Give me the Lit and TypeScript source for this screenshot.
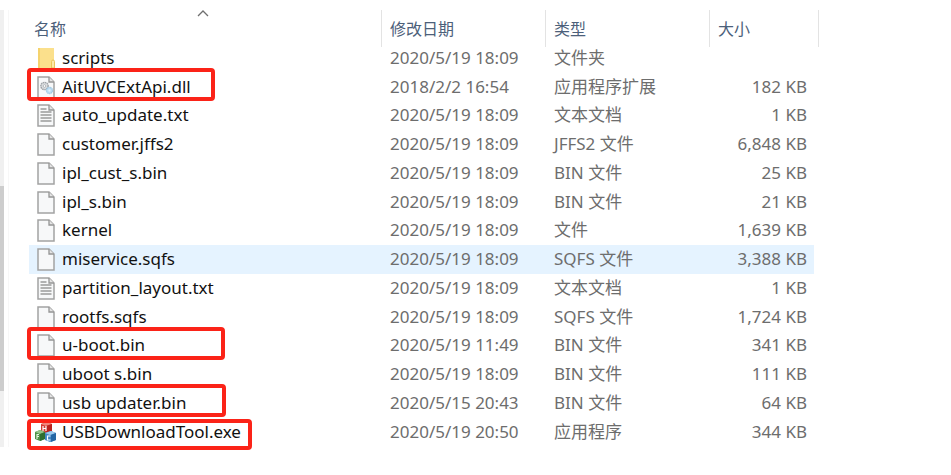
import { LitElement, html, svg, css, nothing } from "lit";
import { customElement } from "lit/decorators.js";
import { classMap } from "lit/directives/class-map.js";
import { styleMap } from "lit/directives/style-map.js";

type Kind = "folder" | "dll" | "text" | "blank" | "exe";

interface FileRow {
  name: string;
  date: string;
  type: string;
  size: string;
  kind: Kind;
  hover?: boolean;
  mark?: number;
  low?: boolean;
}

const files: FileRow[] = [
  { name: "scripts", date: "2020/5/19 18:09", type: "文件夹", size: "", kind: "folder" },
  { name: "AitUVCExtApi.dll", date: "2018/2/2 16:54", type: "应用程序扩展", size: "182 KB", kind: "dll", mark: 188 },
  { name: "auto_update.txt", date: "2020/5/19 18:09", type: "文本文档", size: "1 KB", kind: "text" },
  { name: "customer.jffs2", date: "2020/5/19 18:09", type: "JFFS2 文件", size: "6,848 KB", kind: "blank" },
  { name: "ipl_cust_s.bin", date: "2020/5/19 18:09", type: "BIN 文件", size: "25 KB", kind: "blank" },
  { name: "ipl_s.bin", date: "2020/5/19 18:09", type: "BIN 文件", size: "21 KB", kind: "blank" },
  { name: "kernel", date: "2020/5/19 18:09", type: "文件", size: "1,639 KB", kind: "blank" },
  { name: "miservice.sqfs", date: "2020/5/19 18:09", type: "SQFS 文件", size: "3,388 KB", kind: "blank", hover: true },
  { name: "partition_layout.txt", date: "2020/5/19 18:09", type: "文本文档", size: "1 KB", kind: "text" },
  { name: "rootfs.sqfs", date: "2020/5/19 18:09", type: "SQFS 文件", size: "1,724 KB", kind: "blank" },
  { name: "u-boot.bin", date: "2020/5/19 11:49", type: "BIN 文件", size: "341 KB", kind: "blank", mark: 198 },
  { name: "uboot s.bin", date: "2020/5/19 18:09", type: "BIN 文件", size: "111 KB", kind: "blank" },
  { name: "usb updater.bin", date: "2020/5/15 20:43", type: "BIN 文件", size: "64 KB", kind: "blank", mark: 199 },
  { name: "USBDownloadTool.exe", date: "2020/5/19 20:50", type: "应用程序", size: "344 KB", kind: "exe", mark: 225, low: true },
];

const page = svg`
  <path d="M4 2H15L20 7V23H4Z" fill="#f7f8f9" stroke="#a2a2a2" stroke-width="1.500"/>
  <path d="M15 2V7H20" fill="#e4e4e4" stroke="#959595" stroke-width="1.300"/>`;

const icons = {
  blank: page,
  text: svg`${page}
    <path d="M6.500 6H12.500M6.500 9H17.500M6.500 12H17.500M6.500 15H17.500M6.500 18H17.500" stroke="#9a9a9a" stroke-width="1.300"/>`,
  dll: svg`${page}
    <circle cx="10.500" cy="11" r="3.600" fill="#e4e6e8" stroke="#a0a4a8" stroke-width="1.500" stroke-dasharray="1.600 .5"/>
    <circle cx="10.500" cy="11" r="1.400" fill="#fff" stroke="#a0a4a8" stroke-width=".8"/>
    <circle cx="15.500" cy="15.500" r="3" fill="#c3e0f3" stroke="#a3cbe4" stroke-width="1.400" stroke-dasharray="1.400 .4"/>
    <circle cx="15.500" cy="15.500" r="1" fill="#e2f2fc"/>`,
  folder: svg`
    <path d="M4 2H20V22H4Z" fill="#fbe08c"/>
    <path d="M4 2H6V22H4Z" fill="#f5d36d"/>
    <path d="M17.500 22V15.500Q17.500 14 19 14Q20.500 14 20.500 15.500V22Z" fill="#fde9a8" stroke="#eac45a" stroke-width="1"/>`,
  exe: svg`
    <path d="M7 4L13 2L18 4V12L12 14L7 12Z" fill="#d53a32"/>
    <path d="M7 4L13 2L18 4L12 6Z" fill="#f0867a"/>
    <path d="M12 6L18 4V12L12 14Z" fill="#b9231f"/>
    <path d="M9 6V11M12 6V11M9 8.500H12" stroke="#fff" stroke-width="1.200"/>
    <path d="M1 12L6 10L11 12V19L6 21L1 19Z" fill="#4c8f45"/>
    <path d="M1 12L6 10L11 12L6 14Z" fill="#93c489"/>
    <path d="M6 14L11 12V19L6 21Z" fill="#2f6e30"/>
    <path d="M3 19V14.500H5M3 16.500H5" stroke="#e6f4e0" stroke-width="1.100" fill="none"/>
    <path d="M11 13L17 11L22 13V20L16 22L11 20Z" fill="#3f86c4"/>
    <path d="M11 13L17 11L22 13L16 15Z" fill="#9ccaec"/>
    <path d="M17 15L22 13V20L17 22Z" fill="#2567a4"/>
    <path d="M16.500 16H13.500V20H16.500" stroke="#fff" stroke-width="1.200" fill="none"/>`,
};

@customElement("app-root")
export class AppRoot extends LitElement {
  static styles = css`
    :host {
      display: block;
      background: #fff;
      color: #6d6d6d;
      font: 17px/26px "Noto Sans", "Noto Sans CJK SC", sans-serif;
    }
    .window {
      display: flex;
      padding: 10px 137px 28px 0;
    }
    .track {
      flex: none;
      display: grid;
      grid-template-rows: 176fr 205fr 56fr;
      width: 4px;
      background: #f0f0f0;
    }
    .thumb {
      grid-row: 2;
      background: #cdcdcd;
    }
    .pane {
      flex: 1;
      min-width: 0;
      margin-left: 4px;
      padding-left: 20px;
      border-left: 1px solid #f7f7f7;
    }
    table {
      width: 100%;
      table-layout: fixed;
      border-collapse: collapse;
    }
    th,
    td {
      padding: 0 7px 2px 9px;
      text-align: left;
      font-weight: 400;
      white-space: nowrap;
    }
    th {
      position: relative;
      height: 30px;
      padding-top: 4px;
      padding-bottom: 0;
      color: #4c607a;
      font-size: 16px;
    }
    th + th::before,
    th:last-child::after {
      content: "";
      position: absolute;
      top: 0;
      left: 0;
      width: 1px;
      height: 37px;
      background: #e3e3e3;
    }
    th:last-child::after {
      left: auto;
      right: -5px;
    }
    th:first-child {
      padding-left: 5px;
    }
    .date,
    .type {
      width: 148px;
    }
    .size {
      width: 89px;
    }
    .sort {
      position: absolute;
      top: 0;
      left: calc(50% - 8px);
    }
    tbody tr {
      height: 29px;
    }
    tbody tr:nth-child(4n + 3) {
      height: 28px;
    }
    .hover {
      background: #e5f3ff;
    }
    .amount {
      text-align: right;
    }
    .name {
      position: relative;
      padding-left: 5px;
      color: #111;
    }
    .entry {
      display: flex;
      align-items: center;
      gap: 5px;
    }
    svg {
      display: block;
      flex: none;
    }
    .mark {
      position: absolute;
      z-index: 1;
      top: -5px;
      left: -2px;
      height: 33px;
      box-sizing: border-box;
      border: 4px solid #fb2318;
      border-radius: 4px;
      pointer-events: none;
    }
    .mark.low {
      top: 1px;
      height: 31px;
    }
  `;

  private row(f: FileRow) {
    return html`<tr class=${classMap({ hover: !!f.hover })}>
      <td class="name">
        <div class="entry">
          <svg width="23" height="24" viewBox="0 0 23 24" fill="none" aria-hidden="true">${icons[f.kind]}</svg>
          <span>${f.name}</span>
        </div>
        ${f.mark
          ? html`<div class=${classMap({ mark: true, low: !!f.low })} style=${styleMap({ width: `${f.mark}px` })}></div>`
          : nothing}
      </td>
      <td>${f.date}</td>
      <td>${f.type}</td>
      <td class="amount">${f.size}</td>
    </tr>`;
  }

  render() {
    return html`<main class="window">
      <div class="track"><div class="thumb"></div></div>
      <div class="pane">
        <table>
          <thead>
            <tr>
              <th>
                名称
                <svg class="sort" width="12" height="8" viewBox="0 0 12 8" fill="none" aria-hidden="true">
                  <path d="M1 6L6 1L11 6" stroke="#6f6f6f" stroke-width="1.300" />
                </svg>
              </th>
              <th class="date">修改日期</th>
              <th class="type">类型</th>
              <th class="size">大小</th>
            </tr>
          </thead>
          <tbody>
            ${files.map((f) => this.row(f))}
          </tbody>
        </table>
      </div>
    </main>`;
  }
}
